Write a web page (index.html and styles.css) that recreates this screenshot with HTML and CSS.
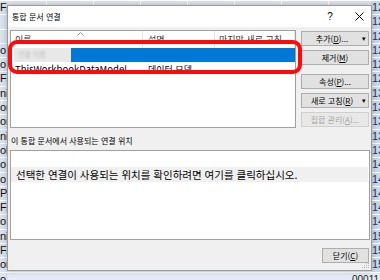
FILE: index.html
```html
<!DOCTYPE html>
<html lang="ko">
<head>
    <meta charset="UTF-8">
    <title>통합 문서 연결</title>
    <link rel="stylesheet" href="styles.css">
</head>
<body>
<div class="sheet">
    <div class="row top"><span class="left">F/</span><span class="right">12</span></div>
    <div class="row"><span class="left"></span><span class="right">12</span></div>
    <div class="row"><span class="left"></span><span class="right">12</span></div>
    <div class="row"><span class="left">o</span><span class="right">12</span></div>
    <div class="row"><span class="left">o</span><span class="right">12</span></div>
    <div class="row"><span class="left">F/</span><span class="right">12</span></div>
    <div class="row"><span class="left">ni</span><span class="right">13</span></div>
    <div class="row"><span class="left">or</span><span class="right">13</span></div>
    <div class="row"><span class="left">or</span><span class="right">13</span></div>
    <div class="row"><span class="left">ni</span><span class="right">13</span></div>
    <div class="row"><span class="left">ol</span><span class="right">13</span></div>
    <div class="row"><span class="left">o</span><span class="right">14</span></div>
    <div class="row"><span class="left">o</span><span class="right">14</span></div>
    <div class="row"><span class="left">Pe</span><span class="right">14</span></div>
    <div class="row"><span class="left">F/</span><span class="right">14</span></div>
    <div class="row"><span class="left">o</span><span class="right">14</span></div>
    <div class="row"><span class="left">ni</span><span class="right">15</span></div>
    <div class="row"><span class="left">F/</span><span class="right">15</span></div>
    <div class="row"><span class="left">or</span><span class="right">15</span></div>
    <div class="row bottom"><span class="left">o</span><span class="code">00011</span></div>
</div>

<div class="dialog">
    <div class="titlebar">
        <span class="title">통합 문서 연결</span>
        <span class="help">?</span>
        <span class="close">
            <svg width="9" height="9" viewBox="0 0 9 9"><path d="M0.5 0.5L8.5 8.5M8.5 0.5L0.5 8.5" stroke="#000" stroke-width="1"/></svg>
        </span>
    </div>
    <div class="body">
        <div class="top-row">
            <div class="list">
                <div class="list-head">
                    <span class="col col-name">이름
                        <svg class="sort" width="7" height="4" viewBox="0 0 7 4"><path d="M0.5 3.5L3.5 0.5L6.5 3.5" fill="none" stroke="#999" stroke-width="1"/></svg>
                    </span>
                    <span class="col col-desc">설명</span>
                    <span class="col col-last">마지막 새로 고침</span>
                </div>
                <div class="list-row selected">
                    <span class="masked"><span class="blur">연결 이름</span></span>
                    <span class="sel-fill"></span>
                </div>
                <div class="list-row">
                    <span class="col col-name model">ThisWorkbookDataModel</span>
                    <span class="col col-desc">데이터 모델</span>
                    <span class="col col-last"></span>
                </div>
            </div>
            <div class="buttons">
                <button class="btn menu">추가(<u>D</u>)...<span class="arrow">▾</span></button>
                <button class="btn">제거(<u>M</u>)</button>
                <button class="btn spaced">속성(<u>P</u>)...</button>
                <button class="btn menu">새로 고침(<u>R</u>)<span class="arrow">▾</span></button>
                <button class="btn" disabled>집합 관리(<u>A</u>)...</button>
            </div>
        </div>
        <div class="label">이 통합 문서에서 사용되는 연결 위치</div>
        <div class="locations">
            <div class="hint">선택한 연결이 사용되는 위치를 확인하려면 여기를 클릭하십시오.</div>
        </div>
        <div class="footer">
            <button class="btn close-btn">닫기(<u>C</u>)</button>
        </div>
        <div class="highlight"></div>
    </div>
    <svg class="grip" width="9" height="9" viewBox="0 0 9 9">
        <g fill="#b5b5b5">
            <rect x="7" y="1" width="1" height="1"/>
            <rect x="5" y="3" width="1" height="1"/><rect x="7" y="3" width="1" height="1"/>
            <rect x="3" y="5" width="1" height="1"/><rect x="5" y="5" width="1" height="1"/><rect x="7" y="5" width="1" height="1"/>
            <rect x="1" y="7" width="1" height="1"/><rect x="3" y="7" width="1" height="1"/><rect x="5" y="7" width="1" height="1"/><rect x="7" y="7" width="1" height="1"/>
        </g>
    </svg>
</div>
</body>
</html>
```

FILE: styles.css
```css
body {
    margin: 0;
    width: 380px;
    height: 280px;
    overflow: hidden;
    position: relative;
    background: #ffffff;
    font-family: "Noto Sans CJK KR", "Liberation Sans", sans-serif;
}

/* spreadsheet behind the dialog */
.sheet {
    padding-top: 1px;
    font-family: "Liberation Sans", sans-serif;
    font-size: 11px;
}

.row {
    height: 14.3px;
    box-sizing: border-box;
    display: flex;
    justify-content: space-between;
    background: #e4ebf4;
    border-bottom: 1px solid #ffffff;
    line-height: 13px;
}

.row.top {
    background: repeating-linear-gradient(90deg, #dfe7f1 0 46px, #ffffff 46px 47px);
}

.left {
    width: 8px;
    overflow: hidden;
    background: #d9e3ef;
    color: #111;
    white-space: nowrap;
}

.right {
    width: 8px;
    overflow: hidden;
    background: #c9d8ea;
    color: #1f3a60;
    padding-left: 1px;
}

.code {
    width: 28px;
    color: #222;
    font-size: 10px;
}

/* dialog */
.dialog {
    position: absolute;
    left: 7px;
    top: 5px;
    width: 365px;
    height: 266px;
    box-sizing: border-box;
    border: 1px solid #9b9b9b;
    background: #f0f0f0;
    box-shadow: 0 0 6px rgba(0, 0, 0, 0.25);
}

.titlebar {
    height: 21px;
    background: #ffffff;
    display: flex;
    align-items: center;
    padding: 0 4px 0 4px;
    font-size: 8px;
    color: #000;
}

.title {
    flex: 1;
}

.help {
    width: 16px;
    text-align: center;
    margin-right: 13px;
    font-family: "Liberation Sans", sans-serif;
    font-size: 10px;
}

.close {
    width: 16px;
    display: flex;
    justify-content: center;
}

.body {
    position: relative;
    padding: 3px 1px 0 2px;
}

.top-row {
    display: flex;
    gap: 5px;
}

.list {
    width: 286px;
    height: 98px;
    box-sizing: border-box;
    border: 1px solid #a0a0a0;
    background: #ffffff;
    overflow: hidden;
}

.list-head {
    height: 17px;
    display: flex;
    font-size: 9px;
    color: #333;
    line-height: 17px;
}

.list-head .col {
    border-right: 1px solid #e5e5e5;
}

.col {
    box-sizing: border-box;
    white-space: nowrap;
    overflow: hidden;
}

.col-name {
    width: 132px;
    padding-left: 4px;
    position: relative;
}

.col-desc {
    width: 72px;
    padding-left: 5px;
}

.col-last {
    flex: 1;
    padding-left: 4px;
}

.sort {
    position: absolute;
    left: 66px;
    top: 1px;
}

.list-row {
    height: 15px;
    display: flex;
    font-size: 9px;
    line-height: 15px;
    color: #000;
}

.list-row.selected {
    height: 14px;
    padding-left: 3px;
}

.masked {
    width: 57px;
    background: #e8e8e8;
    overflow: hidden;
}

.blur {
    display: block;
    padding-left: 4px;
    font-size: 7px;
    line-height: 13px;
    color: #bdbdbd;
    filter: blur(1px);
}

.sel-fill {
    flex: 1;
    background: #0078d7;
}

.model {
    font-size: 9.5px;
}

.buttons {
    width: 68px;
    margin-top: 1px;
    display: flex;
    flex-direction: column;
    gap: 4px;
}

.btn {
    height: 15px;
    padding: 0;
    box-sizing: border-box;
    border: 1px solid #adadad;
    background: #e1e1e1;
    font-family: "Noto Sans CJK KR", "Liberation Sans", sans-serif;
    font-size: 8px;
    line-height: 13px;
    color: #000;
    position: relative;
}

.btn u {
    text-decoration: underline;
}

.btn.menu {
    padding-right: 6px;
}

.btn.spaced {
    margin-top: 5px;
}

.btn:disabled {
    background: #e8e8e8;
    border-color: #cfcfcf;
    color: #a6a6a6;
}

.arrow {
    position: absolute;
    right: 2px;
    top: 0;
    font-size: 7px;
}

.label {
    margin-top: 7px;
    height: 12px;
    line-height: 12px;
    padding-left: 1px;
    font-size: 8px;
    color: #000;
}

.locations {
    margin-top: 3px;
    height: 90px;
    box-sizing: border-box;
    border: 1px solid #a0a0a0;
    background: #ffffff;
    padding: 16px 1px 0 0;
}

.hint {
    height: 15px;
    background: #f0f0f0;
    padding-left: 5px;
    font-size: 10.5px;
    line-height: 15px;
    color: #000;
    white-space: nowrap;
}

.footer {
    margin-top: 8px;
    display: flex;
    justify-content: flex-end;
    padding-right: 1px;
}

.close-btn {
    width: 47px;
}

.highlight {
    position: absolute;
    left: 0;
    top: 13px;
    width: 294px;
    height: 34px;
    box-sizing: border-box;
    border: 4px solid #ff0a0a;
    border-radius: 9px;
}

.grip {
    position: absolute;
    right: 1px;
    bottom: 1px;
}
```
